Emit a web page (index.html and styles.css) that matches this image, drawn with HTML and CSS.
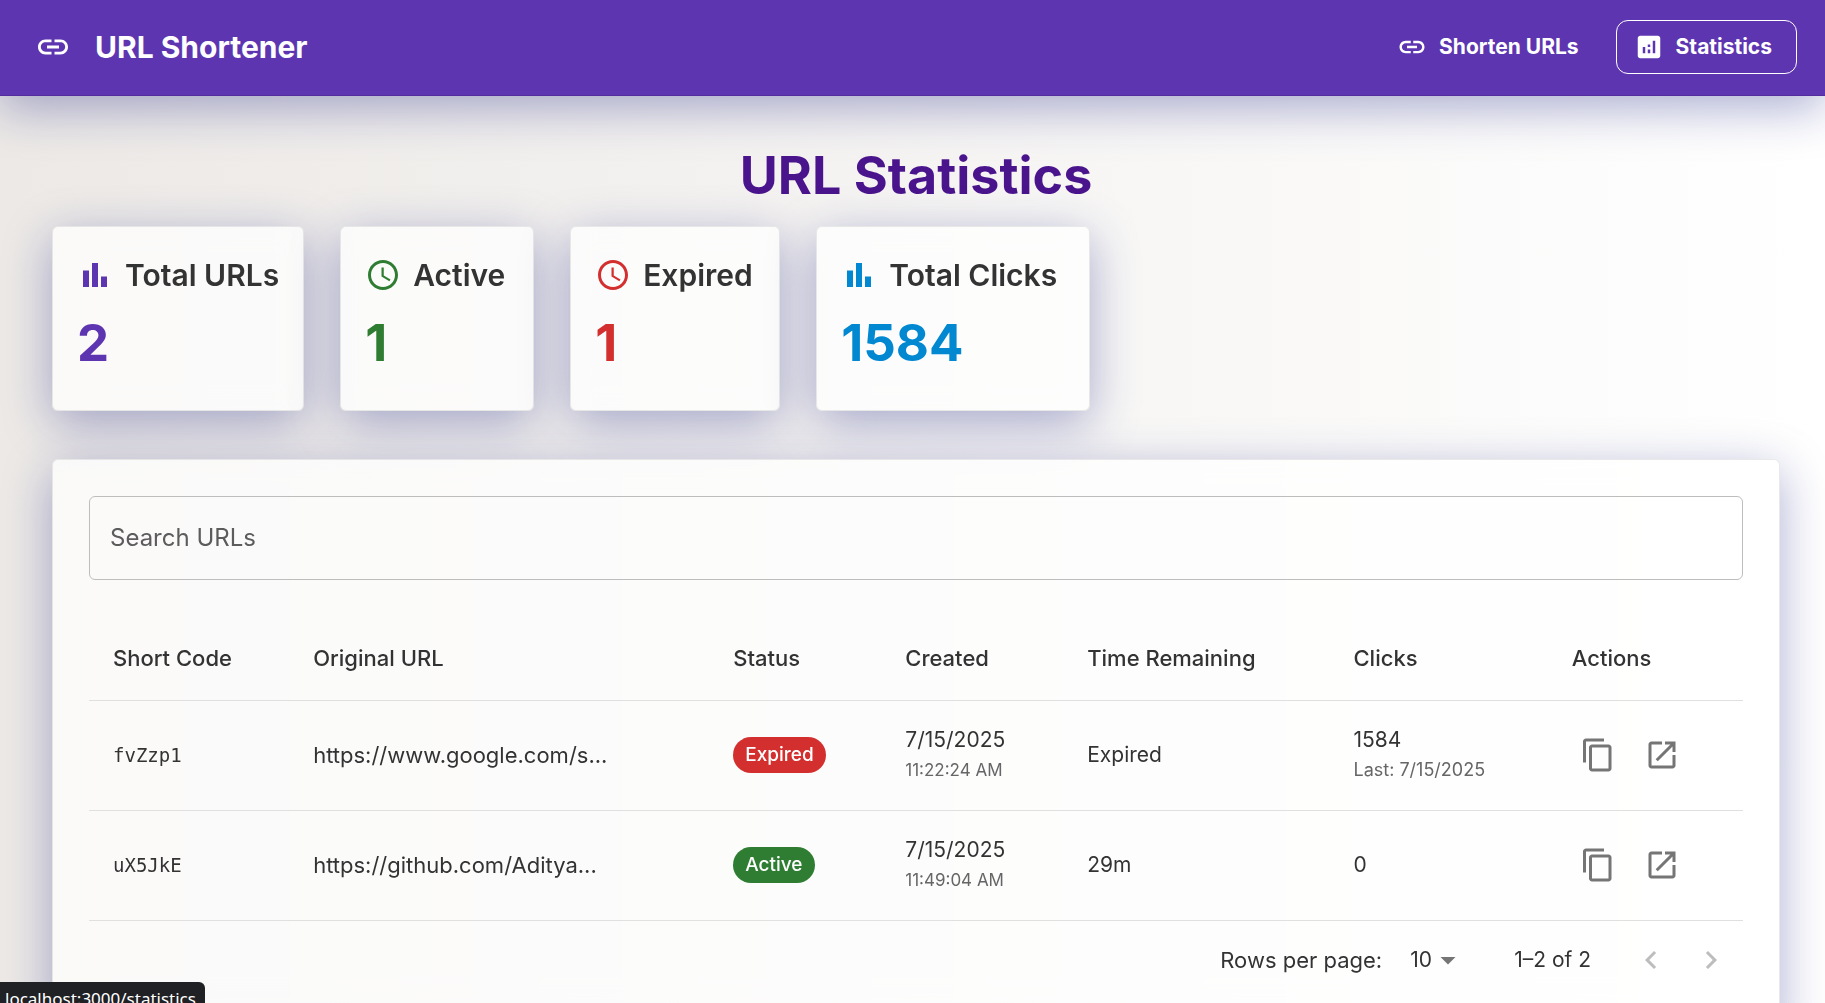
FILE: index.html
```html
<!DOCTYPE html>
<html lang="en">
<head>
<meta charset="utf-8">
<meta name="viewport" content="width=device-width, initial-scale=1">
<title>URL Shortener</title>
<link rel="stylesheet" href="styles.css">
</head>
<body>
<svg class="sprite" aria-hidden="true">
  <symbol id="link" viewBox="0 0 24 24"><path d="M3.9 12c0-1.71 1.39-3.1 3.1-3.1h4V7H7c-2.76 0-5 2.24-5 5s2.24 5 5 5h4v-1.9H7c-1.71 0-3.1-1.39-3.1-3.1zM8 13h8v-2H8v2zm9-6h-4v1.9h4c1.71 0 3.1 1.39 3.1 3.1s-1.39 3.1-3.1 3.1h-4V17h4c2.76 0 5-2.24 5-5s-2.24-5-5-5z"/></symbol>
  <symbol id="analytics" viewBox="0 0 24 24"><path d="M19 3H5c-1.1 0-2 .9-2 2v14c0 1.1.9 2 2 2h14c1.1 0 2-.9 2-2V5c0-1.1-.9-2-2-2zM9 17H7v-5h2v5zm4 0h-2v-3h2v3zm0-5h-2v-2h2v2zm4 5h-2V7h2v10z"/></symbol>
  <symbol id="bars" viewBox="0 0 24 24"><path d="M4 9h4v11H4zm12 4h4v7h-4zm-6-9h4v16h-4z"/></symbol>
  <symbol id="clock" viewBox="0 0 24 24"><path d="M11.99 2C6.47 2 2 6.48 2 12s4.47 10 9.99 10C17.52 22 22 17.52 22 12S17.52 2 11.99 2zM12 20c-4.42 0-8-3.58-8-8s3.58-8 8-8 8 3.58 8 8-3.58 8-8 8zm.5-13H11v6l5.25 3.15.75-1.23-4.5-2.67z"/></symbol>
  <symbol id="copy" viewBox="0 0 24 24"><path d="M16 1H4c-1.1 0-2 .9-2 2v14h2V3h12V1zm3 4H8c-1.1 0-2 .9-2 2v14c0 1.1.9 2 2 2h11c1.1 0 2-.9 2-2V7c0-1.1-.9-2-2-2zm0 16H8V7h11v14z"/></symbol>
  <symbol id="open" viewBox="0 0 24 24"><path d="M19 19H5V5h7V3H5c-1.11 0-2 .9-2 2v14c0 1.1.89 2 2 2h14c1.1 0 2-.9 2-2v-7h-2v7zM14 3v2h3.59l-9.83 9.83 1.41 1.41L19 6.41V10h2V3h-7z"/></symbol>
  <symbol id="left" viewBox="0 0 24 24"><path d="M15.41 16.59 10.83 12l4.58-4.59L14 6l-6 6 6 6z"/></symbol>
  <symbol id="right" viewBox="0 0 24 24"><path d="M8.59 16.59 13.17 12 8.59 7.41 10 6l6 6-6 6z"/></symbol>
  <symbol id="drop" viewBox="0 0 24 24"><path d="m7 10 5 5 5-5z"/></symbol>
</svg>

<header class="appbar">
  <div class="brand">
    <svg class="icon" aria-hidden="true"><use href="#link"/></svg>
    <span>URL Shortener</span>
  </div>
  <nav class="nav">
    <a class="nav-link" href="/"><svg class="icon icon-small" aria-hidden="true"><use href="#link"/></svg>Shorten URLs</a>
    <a class="nav-link nav-link-current" href="/statistics"><svg class="icon icon-small" aria-hidden="true"><use href="#analytics"/></svg>Statistics</a>
  </nav>
</header>

<main class="page">
  <h1 class="title">URL Statistics</h1>

  <section class="stats">
    <article class="stat stat-total">
      <h2 class="stat-head"><svg class="icon" aria-hidden="true"><use href="#bars"/></svg><span>Total URLs</span></h2>
      <p class="stat-value">2</p>
    </article>
    <article class="stat stat-active">
      <h2 class="stat-head"><svg class="icon" aria-hidden="true"><use href="#clock"/></svg><span>Active</span></h2>
      <p class="stat-value">1</p>
    </article>
    <article class="stat stat-expired">
      <h2 class="stat-head"><svg class="icon" aria-hidden="true"><use href="#clock"/></svg><span>Expired</span></h2>
      <p class="stat-value">1</p>
    </article>
    <article class="stat stat-clicks">
      <h2 class="stat-head"><svg class="icon" aria-hidden="true"><use href="#bars"/></svg><span>Total Clicks</span></h2>
      <p class="stat-value">1584</p>
    </article>
  </section>

  <section class="panel">
    <input class="search" type="text" placeholder="Search URLs" aria-label="Search URLs">

    <table class="table">
      <colgroup>
        <col class="col-code"><col class="col-url"><col class="col-status"><col class="col-created"><col class="col-time"><col class="col-clicks"><col>
      </colgroup>
      <thead>
        <tr><th>Short Code</th><th>Original URL</th><th>Status</th><th>Created</th><th>Time Remaining</th><th>Clicks</th><th>Actions</th></tr>
      </thead>
      <tbody>
        <tr>
          <td class="code">fvZzp1</td>
          <td class="url">https://www.google.com/s...</td>
          <td><span class="chip chip-expired">Expired</span></td>
          <td>7/15/2025<small class="sub sub-time">11:22:24 AM</small></td>
          <td>Expired</td>
          <td>1584<small class="sub">Last: 7/15/2025</small></td>
          <td>
            <div class="actions">
              <button class="icon-button" type="button" aria-label="Copy fvZzp1"><svg class="icon" aria-hidden="true"><use href="#copy"/></svg></button>
              <button class="icon-button" type="button" aria-label="Open fvZzp1"><svg class="icon" aria-hidden="true"><use href="#open"/></svg></button>
            </div>
          </td>
        </tr>
        <tr>
          <td class="code">uX5JkE</td>
          <td class="url">https://github.com/Aditya...</td>
          <td><span class="chip chip-active">Active</span></td>
          <td>7/15/2025<small class="sub sub-time">11:49:04 AM</small></td>
          <td>29m</td>
          <td>0</td>
          <td>
            <div class="actions">
              <button class="icon-button" type="button" aria-label="Copy uX5JkE"><svg class="icon" aria-hidden="true"><use href="#copy"/></svg></button>
              <button class="icon-button" type="button" aria-label="Open uX5JkE"><svg class="icon" aria-hidden="true"><use href="#open"/></svg></button>
            </div>
          </td>
        </tr>
      </tbody>
    </table>

    <div class="pagination">
      <label class="rows-label" for="rows">Rows per page:</label>
      <div class="rows">
        <select class="rows-select" id="rows"><option>10</option><option>25</option><option>50</option></select>
        <svg class="icon rows-arrow" aria-hidden="true"><use href="#drop"/></svg>
      </div>
      <span class="range">1–2 of 2</span>
      <div class="pager">
        <button class="pager-button" type="button" aria-label="Previous page" disabled><svg class="icon" aria-hidden="true"><use href="#left"/></svg></button>
        <button class="pager-button" type="button" aria-label="Next page" disabled><svg class="icon" aria-hidden="true"><use href="#right"/></svg></button>
      </div>
    </div>
  </section>
</main>

<div class="link-status">localhost:3000/statistics</div>
</body>
</html>
```

FILE: styles.css
```css
* {
  box-sizing: border-box;
}

body {
  margin: 0;
  min-height: 100vh;
  background: linear-gradient(to right, #ece9e6, #ffffff);
  color: #333333;
  font-family: Inter, "Open Sans", sans-serif;
  font-size: 21px;
  line-height: 30px;
}

.sprite {
  display: none;
}

.icon {
  width: 36px;
  height: 36px;
  flex: none;
  display: block;
  fill: currentColor;
}

.icon-small {
  width: 30px;
  height: 30px;
}

/* Top bar */
.appbar {
  display: flex;
  align-items: center;
  justify-content: space-between;
  height: 96px;
  padding: 0 28px 2px 35px;
  border-bottom: 1px solid #512da0;
  background: #5e35b1;
  color: #ffffff;
  box-shadow: 0 12px 48px rgba(31, 38, 135, 0.37);
}

.brand {
  display: flex;
  align-items: center;
  gap: 24px;
  font-size: 30px;
  font-weight: 700;
}

.nav {
  display: flex;
  gap: 12px;
}

.nav-link {
  display: flex;
  align-items: center;
  gap: 12px;
  height: 54px;
  padding: 0 24px 0 17px;
  border: 1px solid transparent;
  border-radius: 12px;
  color: inherit;
  font-weight: 700;
  text-decoration: none;
}

.nav-link-current {
  border-color: #ffffff;
}

/* Page */
.page {
  padding: 48px 45px 48px 52px;
}

.title {
  margin: 0 0 19px;
  color: #4a148c;
  font-size: 52px;
  font-weight: 700;
  line-height: 63px;
  text-align: center;
}

.stats {
  display: flex;
  flex-wrap: wrap;
  gap: 36px;
  margin-bottom: 48px;
}

.stat,
.panel {
  border: 1px solid rgba(200, 200, 200, 0.4);
  border-radius: 6px;
  background: rgba(255, 255, 255, 0.75);
  box-shadow: 0 12px 48px rgba(31, 38, 135, 0.37);
  backdrop-filter: blur(12px);
}

.stat {
  padding: 24px 24px 36px;
}

.stat-head {
  display: flex;
  align-items: center;
  gap: 12px;
  margin: 0 0 12px;
  font-size: 30px;
  font-weight: 600;
  line-height: 48px;
}

.stat-head span {
  color: #333333;
}

.stat-value {
  margin: 0;
  font-size: 51px;
  font-weight: 700;
  line-height: 63px;
}

.stat-total {
  min-width: 252px;
  color: #5e35b1;
}

.stat-active {
  min-width: 194px;
  color: #2e7d32;
}

.stat-expired {
  min-width: 210px;
  color: #d32f2f;
}

.stat-clicks {
  min-width: 274px;
  color: #0288d1;
}

/* Table panel */
.panel {
  padding: 36px;
}

.search {
  display: block;
  width: 100%;
  height: 84px;
  margin-bottom: 36px;
  padding: 0 20px 2px;
  border: 1px solid #bdbdbd;
  border-radius: 6px;
  background: transparent;
  color: inherit;
  font: inherit;
  font-size: 24px;
}

.search::placeholder {
  color: #5c5c5c;
  opacity: 1;
}

.table {
  width: 100%;
  border-collapse: collapse;
  table-layout: fixed;
}

.col-code { width: 12.1%; }
.col-url { width: 25.4%; }
.col-status { width: 10.4%; }
.col-created { width: 11%; }
.col-time { width: 16.1%; }
.col-clicks { width: 13.2%; }

.table th,
.table td {
  height: 110px;
  padding: 0 24px;
  border-bottom: 1px solid #e0e0e0;
  text-align: left;
  white-space: nowrap;
}

.table th {
  height: 84px;
  font-size: 22px;
  font-weight: 500;
}

.table .code {
  font-family: "DejaVu Sans Mono", monospace;
  font-size: 19px;
}

.table .url {
  font-size: 22px;
}

.sub {
  display: block;
  color: #666666;
  font-size: 18px;
}

.sub-time {
  font-size: 17px;
}

.chip {
  display: inline-block;
  padding: 0 12px;
  border-radius: 18px;
  color: #ffffff;
  font-size: 19px;
  font-weight: 500;
  line-height: 36px;
  vertical-align: middle;
}

.chip-expired {
  background: #d32f2f;
}

.chip-active {
  background: #2e7d32;
}

.actions {
  display: flex;
  gap: 12px;
}

.icon-button,
.pager-button {
  padding: 8px;
  border: 0;
  background: none;
  color: #757575;
}

.pagination {
  display: flex;
  align-items: center;
  justify-content: flex-end;
  height: 78px;
  padding-right: 2px;
}

.rows-label {
  font-size: 22px;
}

.rows {
  display: grid;
  align-items: center;
  width: 72px;
  margin: 0 48px 0 12px;
}

.rows-select,
.rows-arrow {
  grid-area: 1 / 1;
}

.rows-select {
  appearance: none;
  width: 100%;
  padding: 0 24px 0 16px;
  border: 0;
  background: none;
  color: inherit;
  font: inherit;
}

.rows-arrow {
  justify-self: end;
  color: #757575;
  pointer-events: none;
}

.pager {
  display: flex;
  margin-left: 30px;
}

.pager-button {
  padding: 12px;
  color: #bdbdbd;
}

/* Link address shown at the window's lower left corner */
.link-status {
  position: fixed;
  bottom: -12px;
  left: 0;
  height: 33px;
  padding: 0 9px 0 5px;
  border-top-right-radius: 6px;
  background: #202124;
  color: #ffffff;
  font-family: "Noto Sans", sans-serif;
  font-size: 17px;
  line-height: 33px;
}
```
